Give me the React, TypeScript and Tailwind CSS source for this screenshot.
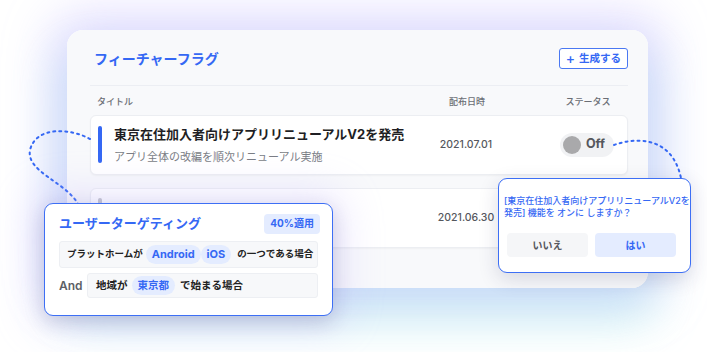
const blue = 'text-[#3568f4]'

function RowCard({ active, date }: { active: boolean; date: string }) {
  return (
    <div className="flex h-[60px] items-center rounded-[6px] border border-[#eceef2] bg-white pl-[7px] shadow-[0_1px_2px_rgba(0,0,0,0.04)]">
      <div className="flex flex-1 items-center">
        <span className={active ? 'h-[37px] w-[4px] rounded-full bg-[#3568f4]' : 'h-[40px] w-[4px] rounded-full bg-[#c4c6cc]'} />
        {active && (
          <div className="ml-[12px] flex flex-col">
            <p className="text-[13px] font-bold leading-[16px] text-[#1f1f24]">東京在住加入者向けアプリリニューアルV2を発売</p>
            <p className="mt-[8px] text-[11px] leading-[14px] text-[#7a7d85]">アプリ全体の改編を順次リニューアル実施</p>
          </div>
        )}
      </div>
      <div className="w-[70px] text-center text-[10.5px] font-medium text-[#55575d]">{date}</div>
      <div className="ml-[46px] flex w-[80px] justify-center">
        {active && (
          <div className="flex h-[24px] items-center gap-[5px] rounded-full bg-[#f1f2f4] pl-[3px] pr-[9px]">
            <span className="h-[18px] w-[18px] rounded-full bg-[#a9a9ab]" />
            <span className="text-[12.5px] font-bold text-[#55575d]">Off</span>
          </div>
        )}
      </div>
    </div>
  )
}

function Chip({ children, size = 'text-[11px]' }: { children: React.ReactNode; size?: string }) {
  return (
    <span className={`flex h-[19px] items-center rounded-full bg-[#e4ecff] px-[6px] font-bold ${size} ${blue}`}>
      {children}
    </span>
  )
}

export default function App() {
  return (
    <div
      className="relative h-[352px] w-[707px] overflow-hidden bg-white"
      style={{ fontFamily: 'Inter, "Noto Sans CJK JP", sans-serif' }}
    >
      {/* glow behind the main card */}
      <div className="absolute left-[67px] top-[30px] h-[258px] w-[581px] rounded-2xl shadow-[0_0_50px_14px_rgba(178,160,255,0.4),0_28px_44px_8px_rgba(165,240,232,0.45)]" />

      <div className="relative ml-[67px] mt-[30px] h-[258px] w-[581px] rounded-2xl bg-[#f8f9fb] pl-[23px] pr-[20px] pt-[18px]">
        <div className="flex h-[21px] items-center justify-between">
          <h1 className={`ml-[4px] text-[14px] font-bold ${blue}`}>フィーチャーフラグ</h1>
          <button className={`flex h-[21px] items-center gap-[4px] rounded-[3px] border-[1.5px] border-[#4a78f2] bg-white px-[6px] text-[10.5px] font-bold ${blue}`}>
            <span className="text-[14px] font-medium leading-none">+</span>
            生成する
          </button>
        </div>
        <div className="mt-[16px] h-px bg-[#eceef3]" />
        <div className="mt-[9px] flex pl-[7px] text-[9px] font-medium text-[#6b6e75]">
          <span className="flex-1">タイトル</span>
          <span className="w-[70px] text-center">配布日時</span>
          <span className="ml-[46px] w-[80px] text-center">ステータス</span>
        </div>
        <div className="mt-[6px]">
          <RowCard active date="2021.07.01" />
        </div>
        <div className="mt-[13px]">
          <RowCard active={false} date="2021.06.30" />
        </div>
      </div>

      {/* dotted connectors */}
      <svg className="pointer-events-none absolute left-0 top-0" width="707" height="352">
        <path
          d="M90 139 C70 128, 36 126, 30 150 C26 172, 66 182, 78 204"
          fill="none"
          stroke="#3568f4"
          strokeWidth="2"
          strokeDasharray="2 4"
          strokeLinecap="round"
        />
        <path
          d="M614 145 C636 137, 672 136, 681 178"
          fill="none"
          stroke="#3568f4"
          strokeWidth="2"
          strokeDasharray="2 4"
          strokeLinecap="round"
        />
      </svg>

      {/* user targeting */}
      <div className="absolute left-[44px] top-[203px] h-[113px] w-[289px] rounded-[9px] border-[1.5px] border-[#3d6ff5] bg-white pl-[14px] pr-[14px] pt-[9px] shadow-[0_6px_20px_rgba(40,40,80,0.18),0_0_40px_10px_rgba(190,175,255,0.3)]">
        <div className="flex h-[21px] items-center justify-between">
          <h2 className={`text-[13px] font-bold ${blue}`}>ユーザーターゲティング</h2>
          <span className={`-mr-[2px] flex h-[20px] items-center rounded-[4px] bg-[#e4ecff] px-[6px] text-[10px] font-bold ${blue}`}>
            40%適用
          </span>
        </div>
        <div className="mt-[7px] flex h-[27px] items-center rounded-[3px] border border-[#edeff3] bg-[#f7f8fa] pl-[7px] text-[9.5px] font-semibold text-[#222]">
          <span>プラットホームが</span>
          <span className="ml-[3px] flex">
            <Chip>Android</Chip>
            <Chip>iOS</Chip>
          </span>
          <span className="ml-[6px]">の一つである場合</span>
        </div>
        <div className="mt-[5px] flex items-center">
          <span className="w-[28px] text-[12px] font-semibold text-[#5c5f66]">And</span>
          <div className="flex h-[25px] flex-1 items-center rounded-[3px] border border-[#edeff3] bg-[#f7f8fa] pl-[8px] text-[10.5px] font-semibold text-[#222]">
            <span>地域が</span>
            <span className="ml-[4px]">
              <Chip size="text-[10.5px]">東京都</Chip>
            </span>
            <span className="ml-[5px]">で始まる場合</span>
          </div>
        </div>
      </div>

      {/* confirm dialog */}
      <div className="absolute left-[498px] top-[178px] h-[95px] w-[193px] rounded-[9px] border-[1.5px] border-[#3d6ff5] bg-white shadow-[0_6px_20px_rgba(40,40,80,0.16)]">
        <p className={`pl-[5px] pt-[16px] text-[9px] font-medium leading-[12px] ${blue}`}>
          [東京在住加入者向けアプリリニューアルV2を
          <br />
          発売] 機能を オンに しますか？
        </p>
        <div className="mt-[14px] flex gap-[7px] pl-[8px]">
          <button className="h-[24px] w-[81px] rounded-[4px] bg-[#f5f6f8] text-[10px] font-semibold text-[#55575d]">いいえ</button>
          <button className={`h-[24px] w-[81px] rounded-[4px] bg-[#e4ecff] text-[10px] font-semibold ${blue}`}>はい</button>
        </div>
      </div>
    </div>
  )
}
